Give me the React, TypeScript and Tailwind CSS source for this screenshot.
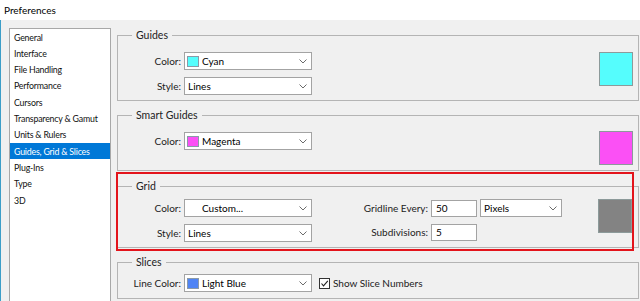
import React from 'react';

const categories = [
  'General',
  'Interface',
  'File Handling',
  'Performance',
  'Cursors',
  'Transparency & Gamut',
  'Units & Rulers',
  'Guides, Grid & Slices',
  'Plug-Ins',
  'Type',
  '3D',
];

const Chevron = () => (
  <svg width="8" height="5" viewBox="0 0 8 5" className="shrink-0">
    <polyline points="0.5,0.5 4,4 7.5,0.5" fill="none" stroke="#6b6b6b" strokeWidth="1" />
  </svg>
);

const Select = ({
  value,
  swatch,
  blankSwatch,
  width = 'w-[128px]',
}: {
  value: string;
  swatch?: string;
  blankSwatch?: boolean;
  width?: string;
}) => (
  <div className={`${width} h-[18px] bg-white border border-[#a3a3a3] flex items-center pl-[2px] pr-[4px]`}>
    {swatch && (
      <span className="w-[12px] h-[11px] mr-[3px] border border-[#8a9aa8]" style={{ backgroundColor: swatch }} />
    )}
    {blankSwatch && <span className="w-[12px] h-[11px] mr-[3px]" />}
    <span className={`flex-1 ${swatch || blankSwatch ? '' : 'pl-[1px]'}`}>{value}</span>
    <Chevron />
  </div>
);

const Field = ({ value }: { value: string }) => (
  <div className="w-[46px] h-[17px] bg-white border border-[#a3a3a3] flex items-center pl-[4px]">{value}</div>
);

const Label = ({ children, className = 'w-[66px]' }: { children: React.ReactNode; className?: string }) => (
  <span className={`${className} text-right pr-[3px] text-[#222]`}>{children}</span>
);

const Group = ({
  title,
  className,
  children,
}: {
  title: string;
  className: string;
  children: React.ReactNode;
}) => (
  <fieldset className={`border border-[#b4b4b4] ${className}`}>
    <legend className="ml-[14px] px-[4px] leading-[16px] text-[10.5px] text-[#222]">{title}</legend>
    {children}
  </fieldset>
);

const Swatch = ({ color, className }: { color: string; className?: string }) => (
  <div className={`w-[34px] h-[34px] ml-auto mr-[5px] border border-[#8c9a9a] ${className ?? ''}`} style={{ backgroundColor: color }} />
);

export default function App() {
  return (
    <div className="relative w-[640px] h-[301px] overflow-hidden bg-white text-black font-['Lato','Liberation_Sans',sans-serif] text-[10px]">
      {/* title bar */}
      <div className="h-[20px] pl-[4px] flex items-center text-[10px]">Preferences</div>

      <div className="h-[281px] bg-[#f0f0f0] border-l border-[#3c9ec8] flex">
        {/* category list */}
        <div className="ml-[8px] mt-[8px] w-[102px] bg-white border border-[#a8a8a8] border-b-0 flex flex-col text-[8.8px] tracking-[-0.2px]">
          {categories.map((c) => (
            <div
              key={c}
              className={`h-[16.3px] flex items-center pl-[4px] whitespace-nowrap ${
                c === 'Guides, Grid & Slices' ? 'bg-[#0078d7] text-white' : 'text-[#111]'
              }`}
            >
              {c}
            </div>
          ))}
        </div>

        {/* settings */}
        <div className="ml-[6px] mt-[7px] w-[522px] flex flex-col">
          <Group title="Guides" className="h-[74px]">
            <div className="flex items-start pt-[9px]">
              <div className="flex flex-col gap-[7px]">
                <div className="flex items-center">
                  <Label>Color:</Label>
                  <Select value="Cyan" swatch="#55fdfd" />
                </div>
                <div className="flex items-center">
                  <Label>Style:</Label>
                  <Select value="Lines" />
                </div>
              </div>
              <Swatch color="#55fdfd" />
            </div>
          </Group>

          <Group title="Smart Guides" className="h-[64px] mt-[6px]">
            <div className="flex items-start pt-[9px]">
              <div className="flex items-center">
                <Label>Color:</Label>
                <Select value="Magenta" swatch="#fb50f5" />
              </div>
              <Swatch color="#fb50f5" className="-mt-[1px]" />
            </div>
          </Group>

          <Group title="Grid" className="h-[70px] mt-[7px]">
            <div className="flex items-start pt-[5px]">
              <div className="flex flex-col gap-[7px]">
                <div className="flex items-center">
                  <Label>Color:</Label>
                  <Select value="Custom..." blankSwatch />
                </div>
                <div className="flex items-center">
                  <Label>Style:</Label>
                  <Select value="Lines" />
                </div>
              </div>
              <div className="flex flex-col gap-[7px]">
                <div className="flex items-center">
                  <Label className="w-[119px]">Gridline Every:</Label>
                  <Field value="50" />
                  <div className="ml-[3px]">
                    <Select value="Pixels" width="w-[82px]" />
                  </div>
                </div>
                <div className="flex items-center">
                  <Label className="w-[119px]">Subdivisions:</Label>
                  <Field value="5" />
                </div>
              </div>
              <Swatch color="#838383" className="mr-[6px]" />
            </div>
          </Group>

          <Group title="Slices" className="h-[45px] mt-[6px]">
            <div className="flex items-center pt-[4px]">
              <Label>Line Color:</Label>
              <Select value="Light Blue" swatch="#4f84f4" />
              <div className="flex items-center ml-[7px]">
                <span className="w-[11px] h-[11px] bg-white border border-[#333] flex items-center justify-center mr-[3px]">
                  <svg width="9" height="9" viewBox="0 0 9 9">
                    <polyline points="1.5,4.5 3.5,6.8 7.8,1.8" fill="none" stroke="#222" strokeWidth="1.1" />
                  </svg>
                </span>
                <span className="text-[#222]">Show Slice Numbers</span>
              </div>
            </div>
          </Group>
        </div>
      </div>

      {/* red highlight annotation */}
      <div className="absolute left-[116px] top-[172px] w-[518px] h-[79px] border-2 border-[#e3141b]" />
    </div>
  );
}
